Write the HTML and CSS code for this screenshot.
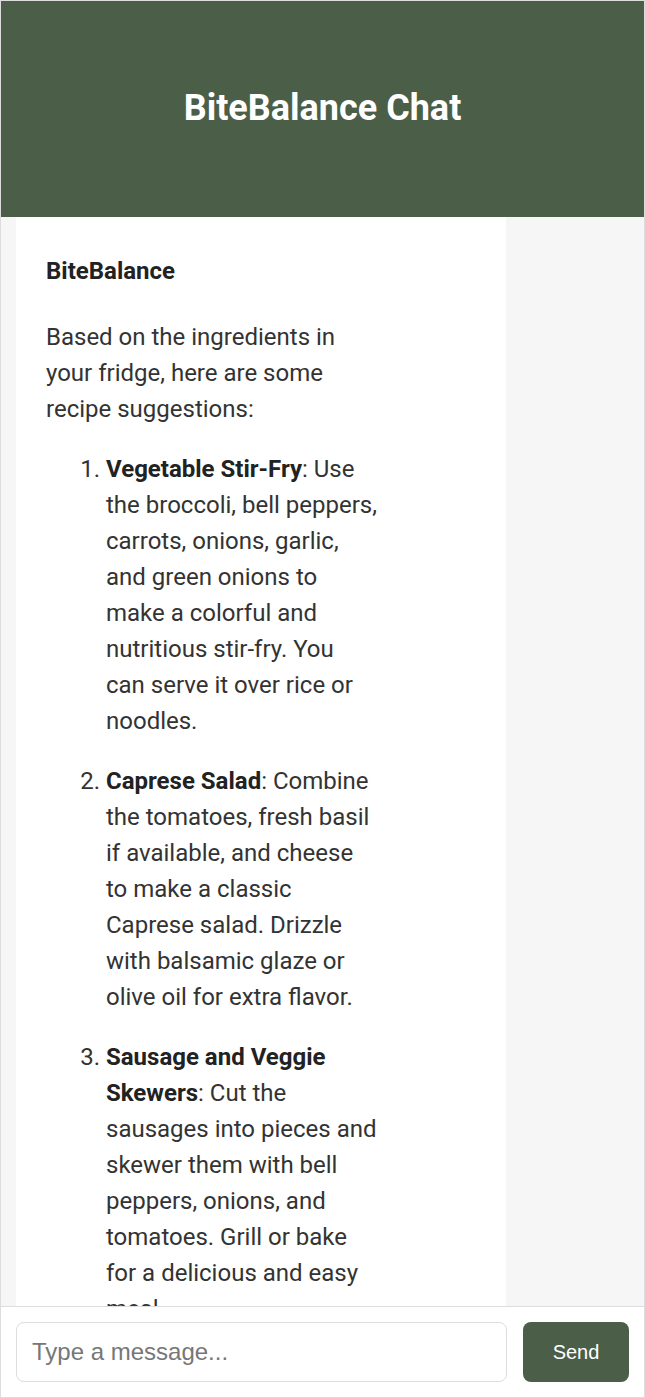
FILE: index.html
```html
<!DOCTYPE html>
<html lang="en">
<head>
<meta charset="utf-8">
<title>BiteBalance Chat</title>
<link rel="stylesheet" href="styles.css">
</head>
<body>
<div class="app">
  <header class="app-header">
    <h1 class="app-title">BiteBalance Chat</h1>
  </header>
  <main class="chat">
    <div class="message">
      <div class="message-name">BiteBalance</div>
      <div class="message-body">
        <p>Based on the ingredients in your fridge, here are some recipe suggestions:</p>
        <ol>
          <li><strong>Vegetable Stir-Fry</strong>: Use the broccoli, bell peppers, carrots, onions, garlic, and green onions to make a colorful and nutritious stir-fry. You can serve it over rice or noodles.</li>
          <li><strong>Caprese Salad</strong>: Combine the tomatoes, fresh basil if available, and cheese to make a classic Caprese salad. Drizzle with balsamic glaze or olive oil for extra flavor.</li>
          <li><strong>Sausage and Veggie Skewers</strong>: Cut the sausages into pieces and skewer them with bell peppers, onions, and tomatoes. Grill or bake for a delicious and easy meal.</li>
        </ol>
      </div>
    </div>
  </main>
  <footer class="composer">
    <input class="composer-input" type="text" placeholder="Type a message...">
    <button class="composer-send" type="button">Send</button>
  </footer>
</div>
</body>
</html>
```
FILE: styles.css
```css
* { box-sizing: border-box; }
html, body { margin: 0; padding: 0; }
body {
  font-family: Roboto, "Noto Sans", sans-serif;
  background: #ffffff;
}
.app {
  width: 645px;
  height: 1398px;
  border: 1px solid #dddddd;
  display: flex;
  flex-direction: column;
  overflow: hidden;
}
.app-header {
  flex: 0 0 216px;
  background: #4a5e48;
  display: flex;
  align-items: center;
  justify-content: center;
}
.app-title {
  margin: 0;
  color: #ffffff;
  font-family: Roboto, sans-serif;
  font-weight: 700;
  font-size: 36px;
  line-height: 1.2;
}
.chat {
  flex: 1 1 auto;
  min-height: 0;
  overflow: hidden;
  background: #f6f6f6;
  padding: 0 15px;
}
.message {
  width: 490px;
  background: #ffffff;
  padding: 36px 30px 30px;
  color: #333333;
  font-size: 24px;
  line-height: 36px;
}
.message-name {
  font-weight: 700;
  color: #222222;
  margin-bottom: 30px;
}
.message-body {
  max-width: 332px;
}
.message-body p {
  margin: 0 0 24px;
}
.message-body ol {
  margin: 0;
  padding-left: 60px;
}
.message-body li {
  margin-bottom: 24px;
}
.message-body strong {
  font-weight: 700;
  color: #222222;
}
.composer {
  flex: 0 0 auto;
  border-top: 1px solid #dddddd;
  background: #ffffff;
  padding: 15px;
  display: flex;
  gap: 16px;
}
.composer-input {
  flex: 1 1 auto;
  min-width: 0;
  height: 60px;
  border: 1px solid #dddddd;
  border-radius: 8px;
  padding: 0 15px;
  font-family: "Liberation Sans", Arial, sans-serif;
  font-size: 24px;
  color: #333333;
  background: #ffffff;
}
.composer-input::placeholder {
  color: #777777;
}
.composer-send {
  flex: 0 0 106px;
  height: 60px;
  border: none;
  border-radius: 8px;
  background: #4a5e48;
  color: #ffffff;
  font-family: "Liberation Sans", Arial, sans-serif;
  font-size: 20px;
}
```
